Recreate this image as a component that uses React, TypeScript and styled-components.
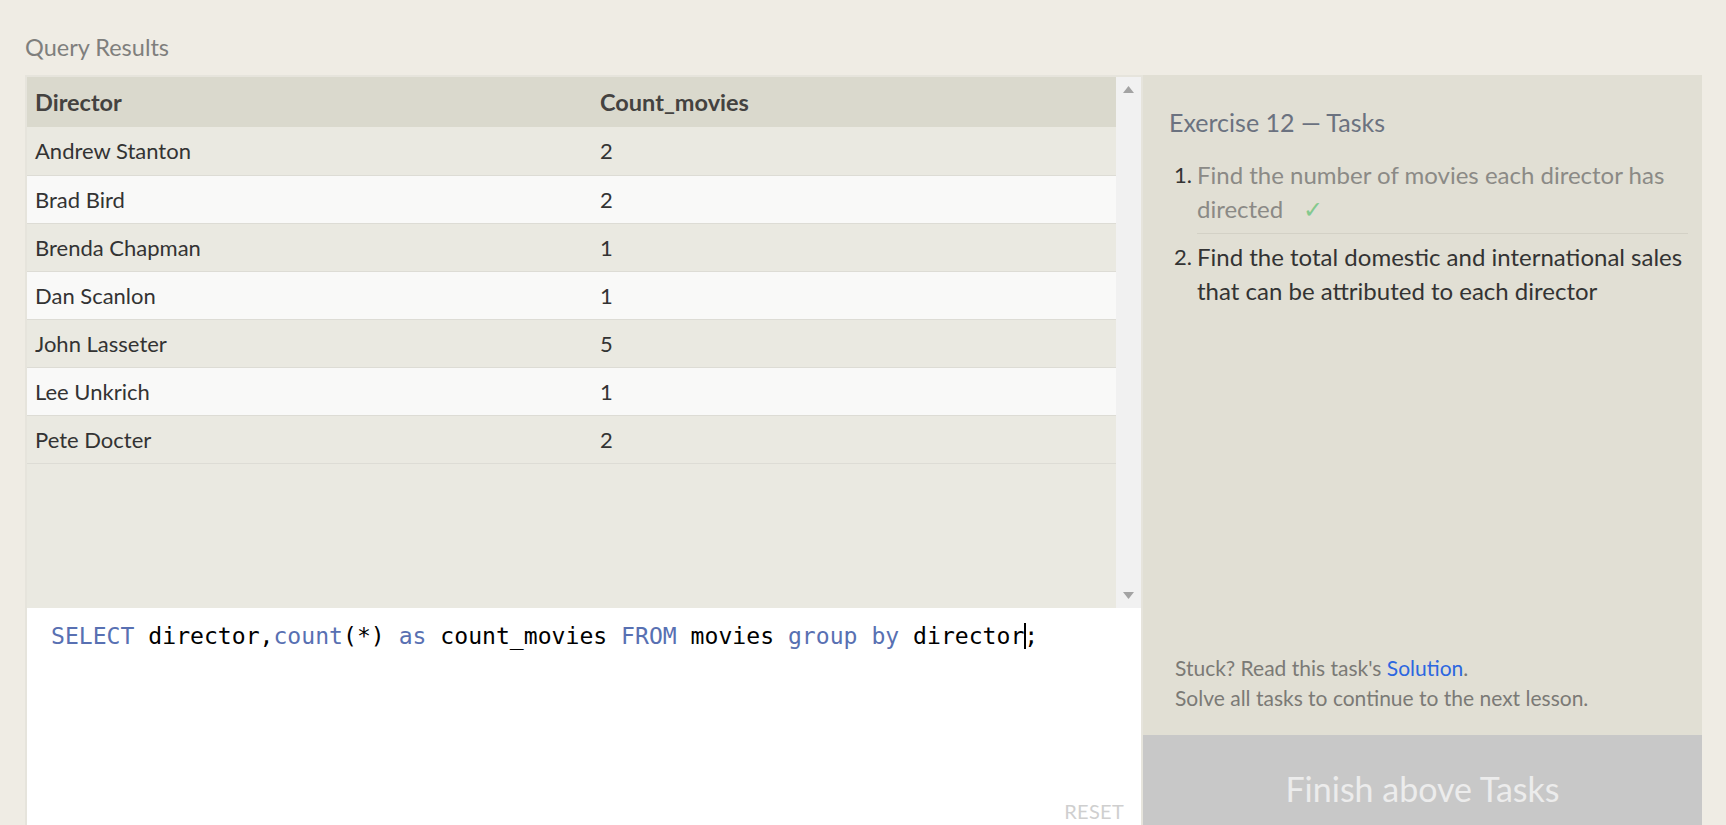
import React from "react";
import styled, { createGlobalStyle } from "styled-components";

const GlobalStyle = createGlobalStyle`
  html, body {
    margin: 0;
    padding: 0;
    overflow: hidden;
    background: #efece4;
  }
  body {
    font-family: Lato, "Open Sans", sans-serif;
  }
  * { box-sizing: border-box; }
`;

const Page = styled.div`
  padding: 31px 24px 0 25px;
`;

const Heading = styled.h2`
  margin: 0 0 12px 0;
  font-size: 23.5px;
  line-height: 32px;
  font-weight: 400;
  color: #7f7f7d;
`;

const Workspace = styled.div`
  display: flex;
  width: 1677px;
  height: 766px;
`;

const LeftColumn = styled.div`
  width: 1118px;
  display: flex;
  flex-direction: column;
  border: 2px solid #e6e4dc;
  border-bottom: none;
`;

const Results = styled.div`
  display: flex;
  height: 531px;
  background: #eae9e1;
`;

const TableArea = styled.div`
  flex: 1;
`;

const Table = styled.table`
  width: 100%;
  border-collapse: collapse;
`;

const HeadCell = styled.th<{ $w?: number }>`
  height: 50px;
  padding: 0 8px;
  text-align: left;
  background: #dad9cd;
  color: #444240;
  font-size: 23.5px;
  font-weight: 700;
  width: ${(p) => (p.$w ? `${p.$w}px` : "auto")};
`;

const Row = styled.tr<{ $even: boolean }>`
  background: ${(p) => (p.$even ? "#f9f9f8" : "#eae9e1")};
  border-bottom: 1px solid #dddcd5;
`;

const Cell = styled.td`
  height: 48px;
  padding: 0 8px;
  color: #333;
  font-size: 22px;
`;

const Scrollbar = styled.div`
  width: 25px;
  background: #f1f1f1;
  display: flex;
  flex-direction: column;
  justify-content: space-between;
  align-items: center;
  padding: 9px 0 9px;
`;

const Editor = styled.div`
  flex: 1;
  background: #ffffff;
  display: flex;
  flex-direction: column;
  padding: 13px 17px 18px 24px;
`;

const Code = styled.div`
  flex: 1;
  font-family: "DejaVu Sans Mono", "Liberation Mono", monospace;
  font-size: 23.1px;
  line-height: 30px;
  color: #000;
  white-space: pre;
`;

const Kw = styled.span`
  color: #5870b2;
`;

const Caret = styled.span`
  display: inline-block;
  width: 2px;
  height: 26px;
  background: #000;
  vertical-align: -5px;
  margin-right: -2px;
`;

const ResetButton = styled.div`
  align-self: flex-end;
  font-size: 20px;
  line-height: 24px;
  color: #cfcfcf;
  letter-spacing: 0.3px;
`;

const RightPanel = styled.div`
  width: 559px;
  background: #e1dfd4;
  display: flex;
  flex-direction: column;
`;

const PanelTitle = styled.h3`
  margin: 31px 0 20px 26px;
  font-size: 25px;
  line-height: 32px;
  font-weight: 400;
  color: #6b7280;
`;

const TaskList = styled.div`
  display: flex;
  flex-direction: column;
  padding: 0 14px 0 31px;
`;

const TaskItem = styled.div<{ $first?: boolean }>`
  display: grid;
  grid-template-columns: 23px 1fr;
  padding-top: ${(p) => (p.$first ? "0" : "6px")};
`;

const TaskNumber = styled.span`
  font-size: 22px;
  line-height: 34px;
  color: #333;
`;

const TaskText = styled.div<{ $done?: boolean }>`
  font-size: 24px;
  line-height: 34px;
  color: ${(p) => (p.$done ? "#8b8a86" : "#333")};
  padding-bottom: ${(p) => (p.$done ? "7px" : "0")};
  border-bottom: ${(p) => (p.$done ? "1px solid #d3d1c6" : "none")};
`;

const Check = styled.span`
  color: #84c98e;
  margin-left: 20px;
  font-size: 24px;
  line-height: 1;
  font-family: "DejaVu Sans", sans-serif;
  font-weight: 300;
`;

const PanelFooter = styled.div`
  margin-top: auto;
  padding: 0 20px 22px 32px;
  font-size: 21px;
  line-height: 30px;
  color: #7b7a76;
`;

const SolutionLink = styled.a`
  color: #2c67e0;
  text-decoration: none;
`;

const FinishButton = styled.div`
  height: 106px;
  background: #c8c8c8;
  color: #ececec;
  font-size: 34px;
  display: flex;
  align-items: center;
  justify-content: center;
`;

const Arrow = ({ down }: { down?: boolean }) => (
  <svg width="11" height="7" viewBox="0 0 11 7">
    <polygon
      points={down ? "0,0 11,0 5.5,7" : "0,7 11,7 5.5,0"}
      fill="#a3a3a3"
    />
  </svg>
);

const rows: [string, number][] = [
  ["Andrew Stanton", 2],
  ["Brad Bird", 2],
  ["Brenda Chapman", 1],
  ["Dan Scanlon", 1],
  ["John Lasseter", 5],
  ["Lee Unkrich", 1],
  ["Pete Docter", 2],
];

export default function App() {
  return (
    <>
      <GlobalStyle />
      <Page>
        <Heading>Query Results</Heading>
        <Workspace>
          <LeftColumn>
            <Results>
              <TableArea>
                <Table>
                  <thead>
                    <tr>
                      <HeadCell $w={565}>Director</HeadCell>
                      <HeadCell>Count_movies</HeadCell>
                    </tr>
                  </thead>
                  <tbody>
                    {rows.map(([name, count], i) => (
                      <Row key={name} $even={i % 2 === 1}>
                        <Cell>{name}</Cell>
                        <Cell>{count}</Cell>
                      </Row>
                    ))}
                  </tbody>
                </Table>
              </TableArea>
              <Scrollbar>
                <Arrow />
                <Arrow down />
              </Scrollbar>
            </Results>
            <Editor>
              <Code>
                <Kw>SELECT</Kw> director,<Kw>count</Kw>(*) <Kw>as</Kw> count_movies{" "}
                <Kw>FROM</Kw> movies <Kw>group</Kw> <Kw>by</Kw> director
                <Caret />;
              </Code>
              <ResetButton>RESET</ResetButton>
            </Editor>
          </LeftColumn>
          <RightPanel>
            <PanelTitle>Exercise 12 — Tasks</PanelTitle>
            <TaskList>
              <TaskItem $first>
                <TaskNumber>1.</TaskNumber>
                <TaskText $done>
                  Find the number of movies each director has directed
                  <Check>✓</Check>
                </TaskText>
              </TaskItem>
              <TaskItem>
                <TaskNumber>2.</TaskNumber>
                <TaskText>
                  Find the total domestic and international sales that can be
                  attributed to each director
                </TaskText>
              </TaskItem>
            </TaskList>
            <PanelFooter>
              Stuck? Read this task's <SolutionLink href="#">Solution</SolutionLink>.
              <br />
              Solve all tasks to continue to the next lesson.
            </PanelFooter>
            <FinishButton>Finish above Tasks</FinishButton>
          </RightPanel>
        </Workspace>
      </Page>
    </>
  );
}
